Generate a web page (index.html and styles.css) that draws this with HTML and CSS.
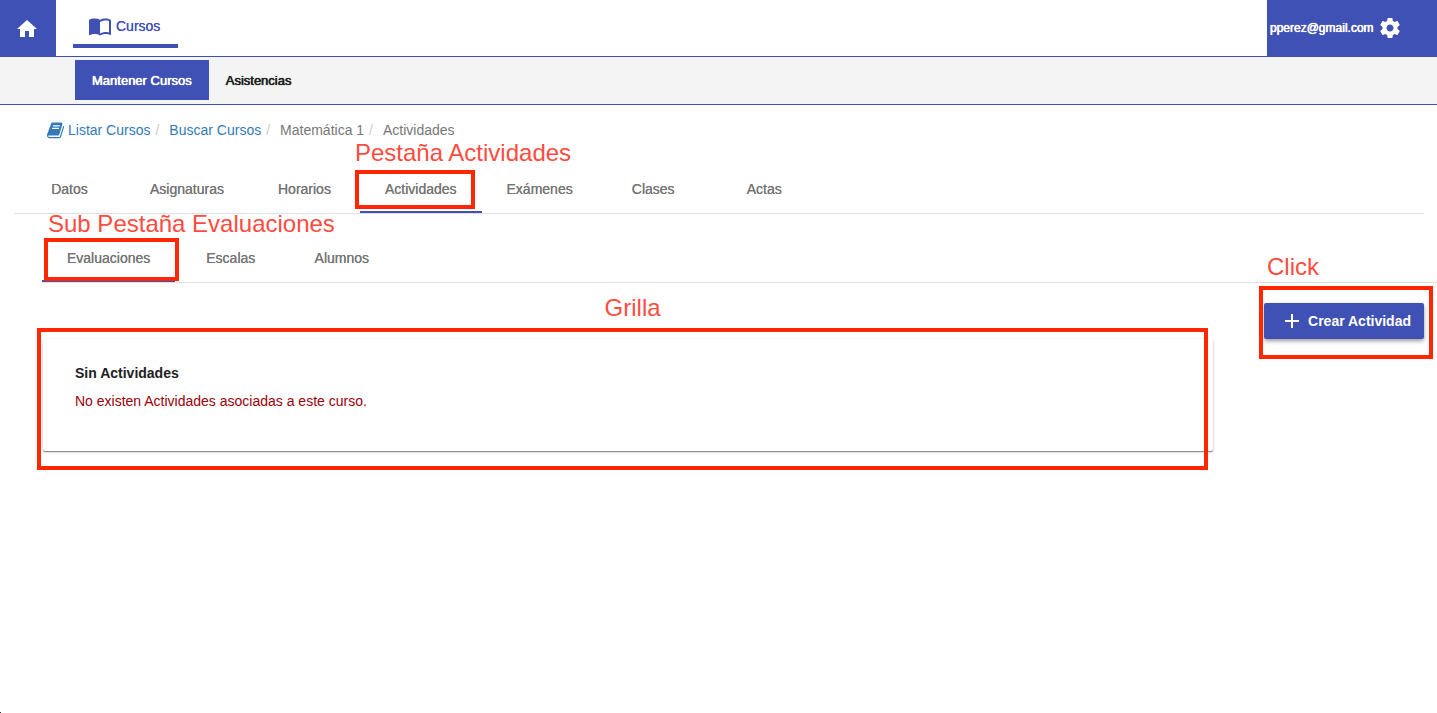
FILE: index.html
```html
<!DOCTYPE html>
<html lang="es">
<head>
<meta charset="utf-8">
<meta name="viewport" content="width=device-width, initial-scale=1">
<title>Mantener Cursos</title>
<link rel="stylesheet" href="styles.css">
</head>
<body>
<header class="topbar">
  <a class="home" href="#" aria-label="Inicio">
    <svg width="24" height="24" viewBox="0 0 24 24" fill="currentColor"><path d="M10 20v-6h4v6h5v-8h3L12 3 2 12h3v8z"/></svg>
  </a>
  <nav class="modules">
    <a class="module" href="#">
      <svg width="24" height="24" viewBox="0 0 24 24" fill="currentColor"><path d="M21 5c-1.11-.35-2.33-.5-3.5-.5-1.95 0-4.05.4-5.5 1.5-1.45-1.1-3.55-1.5-5.5-1.5S2.45 4.900 1 6v14.650c0 .25.25.5.5.5.1 0 .15-.05.25-.05C3.100 20.450 5.050 20 6.500 20c1.950 0 4.050.4 5.500 1.500 1.350-.85 3.800-1.500 5.500-1.500 1.650 0 3.350.3 4.750 1.050.1.05.15.05.25.05.25 0 .5-.25.5-.5V6c-.6-.45-1.250-.75-2-1zm0 13.500c-1.100-.35-2.300-.5-3.500-.5-1.700 0-4.150.65-5.500 1.500V8c1.350-.85 3.800-1.500 5.500-1.500 1.200 0 2.400.15 3.500.5v11.500z"/></svg>
      <span>Cursos</span>
    </a>
  </nav>
  <button class="account" type="button">
    <span>pperez@gmail.com</span>
    <svg width="24" height="24" viewBox="0 0 24 24" fill="currentColor"><path d="M19.430 12.980c.04-.32.07-.64.07-.98s-.03-.66-.07-.98l2.110-1.650c.19-.15.24-.42.12-.64l-2-3.460c-.12-.22-.39-.3-.61-.22l-2.490 1c-.52-.4-1.080-.73-1.690-.98l-.38-2.650C14.460 2.180 14.250 2 14 2h-4c-.25 0-.46.18-.49.42l-.38 2.650c-.61.25-1.170.59-1.690.98l-2.490-1c-.23-.09-.49 0-.61.22l-2 3.460c-.13.22-.07.49.12.64l2.110 1.650c-.04.32-.07.65-.07.98s.03.66.07.98l-2.110 1.650c-.19.15-.24.42-.12.64l2 3.460c.12.22.39.3.61.22l2.490-1c.52.4 1.080.73 1.690.98l.38 2.650c.03.24.24.42.49.42h4c.25 0 .46-.18.49-.42l.38-2.650c.61-.25 1.170-.59 1.690-.98l2.490 1c.23.09.49 0 .61-.22l2-3.460c.12-.22.07-.49-.12-.64l-2.110-1.650zM12 15.500c-1.930 0-3.500-1.570-3.500-3.500s1.570-3.500 3.500-3.500 3.500 1.570 3.500 3.500-1.570 3.500-3.500 3.500z"/></svg>
  </button>
</header>
<nav class="subnav">
  <a class="subnav-item current" href="#">Mantener Cursos</a>
  <a class="subnav-item" href="#">Asistencias</a>
</nav>
<main>
  <nav class="crumbs" aria-label="Ruta">
    <svg width="17" height="17" viewBox="0 -60 1664 1600" fill="currentColor"><path d="M1639 308q40 57 18 129l-275 906q-19 64-76.500 107.500T1183 1494H260q-77 0-148.500-53.500T12 1309q-24-67-2-127 0-4 3-27t4-37q1-8-3-21.500t-3-19.500q2-11 8-21t16.500-23.500T52 1009q23-38 45-91.500t30-91.500q3-10 .5-30t-.5-28q3-11 17-28t17-23q21-36 42-92t25-90q1-9-2.500-32t.5-28q4-13 22-30.500t22-22.500q19-26 42.500-84.500T340 240q1-8-3-25.500t-2-26.500q2-8 9-18t18-23 17-21q8-12 16.500-30.500t15-35 16-36 19.500-32T472.500-31t36-11.500T556-37l-1 3q38-9 51-9h761q74 0 114 56t18 130l-274 906q-36 119-71.500 153.500T1025 1237H156q-27 0-38 15-11 16-1 43 24 70 144 70h923q29 0 56-15.500t35-41.500l300-987q7-22 5-57 38 15 59 43zm-1064 2q-4 13 2 22.500t20 9.500h608q13 0 25.500-9.500T1247 310l21-64q4-13-2-22.500t-20-9.500H638q-13 0-25.500 9.500T596 246zm-83 256q-4 13 2 22.500t20 9.500h608q13 0 25.500-9.500T1164 566l21-64q4-13-2-22.500t-20-9.500H555q-13 0-25.500 9.500T513 502z"/></svg>
    <ol>
      <li><a href="#">Listar Cursos</a></li>
      <li><a href="#">Buscar Cursos</a></li>
      <li>Matemática 1</li>
      <li>Actividades</li>
    </ol>
  </nav>
  <div class="tabs" role="tablist" aria-label="Curso">
    <button class="tab" role="tab" type="button">Datos</button>
    <button class="tab" role="tab" type="button">Asignaturas</button>
    <button class="tab" role="tab" type="button">Horarios</button>
    <div class="marked">
      <button class="tab active" role="tab" type="button" aria-selected="true">Actividades</button>
      <span class="note note-tab">Pestaña Actividades</span>
      <span class="frame frame-tab"></span>
    </div>
    <button class="tab" role="tab" type="button">Exámenes</button>
    <button class="tab" role="tab" type="button">Clases</button>
    <button class="tab" role="tab" type="button">Actas</button>
  </div>
  <div class="tabs subtabs" role="tablist" aria-label="Actividades">
    <div class="marked">
      <button class="tab active" role="tab" type="button" aria-selected="true">Evaluaciones</button>
      <span class="note note-subtab">Sub Pestaña Evaluaciones</span>
      <span class="frame frame-subtab"></span>
    </div>
    <button class="tab" role="tab" type="button">Escalas</button>
    <button class="tab" role="tab" type="button">Alumnos</button>
  </div>
  <div class="content">
    <section class="card marked">
      <h2>Sin Actividades</h2>
      <p>No existen Actividades asociadas a este curso.</p>
      <span class="note note-grid">Grilla</span>
      <span class="frame frame-grid"></span>
    </section>
    <div class="marked">
      <button class="create" type="button">
        <svg width="24" height="24" viewBox="0 0 24 24" fill="currentColor"><path d="M19 13h-6v6h-2v-6H5v-2h6V5h2v6h6z"/></svg>
        <span>Crear Actividad</span>
      </button>
      <span class="note note-create">Click</span>
      <span class="frame frame-create"></span>
    </div>
  </div>
</main>
</body>
</html>
```
FILE: styles.css
```css
:root {
  --primary: #3f51b5;
  --mark: #ff2600;
}
* { box-sizing: border-box; }
body {
  min-height: 100vh;
  margin: 0;
  background: #fff;
  color: #212121;
  font: 14px/20px "Liberation Sans", Arial, sans-serif;
}
body::after {
  content: "";
  position: fixed;
  bottom: 0;
  left: 0;
  width: 1px;
  height: 1px;
  background: #333;
}
a { color: inherit; text-decoration: none; }
button { border: 0; background: none; color: inherit; font: inherit; cursor: pointer; }
svg { display: block; flex: none; }

.topbar {
  display: flex;
  height: 57px;
  border-bottom: 1px solid var(--primary);
}
.home {
  display: flex;
  align-items: center;
  width: 56px;
  padding: 2px 15px 0;
  background: var(--primary);
  color: #fff;
}
.modules { flex: 1; padding-left: 17px; }
.module {
  display: inline-flex;
  align-items: center;
  gap: 4px;
  height: 48px;
  padding: 8px 18px 0 15px;
  border-bottom: 4px solid var(--primary);
  color: var(--primary);
  text-shadow: 0 0 0 currentColor;
}
.account {
  display: flex;
  align-items: center;
  gap: 4px;
  width: 170px;
  padding: 0 0 0 3px;
  background: var(--primary);
  color: #fff;
  font-size: 12px;
  text-shadow: 0 0 0 currentColor, 0 0 1px currentColor;
}

.subnav {
  display: flex;
  height: 48px;
  padding: 3px 75px 4px;
  border-bottom: 1px solid var(--primary);
  background: #f4f4f4;
}
.subnav-item {
  display: flex;
  align-items: center;
  padding: 2px 17px 0;
  font-size: 13px;
  text-shadow: 0 0 0 currentColor, 0 0 1px currentColor;
}
.subnav-item.current { background: var(--primary); color: #fff; }

.crumbs {
  display: flex;
  align-items: center;
  gap: 4px;
  padding: 15px 47px;
  color: #337ab7;
}
.crumbs ol { display: flex; margin: 0; padding: 0; list-style: none; }
.crumbs li { color: #777; }
.crumbs a { color: #337ab7; }
.crumbs li + li::before { content: "/"; padding: 0 10px 0 5px; color: #ccc; }

.tabs {
  display: flex;
  height: 49px;
  margin: 10px 13px 0 14px;
  border-bottom: 1px solid #e0e0e0;
}
.subtabs { margin: 20px 0 0 42px; }
.tab {
  min-width: 111px;
  height: 48px;
  padding: 0 25px;
  color: #757575;
  text-shadow: 0 0 0 currentColor;
}
.tab.active { box-shadow: inset 0 -2px var(--primary); }

.content {
  display: flex;
  align-items: flex-start;
  gap: 51px;
  padding: 20px 13px 20px 43px;
}
.card {
  flex: 1;
  margin-top: 36px;
  padding: 24px 32px 40px;
  border-radius: 2px;
  box-shadow: 0 1px 1px rgba(0, 0, 0, .4), 0 1px 3px rgba(0, 0, 0, .2);
}
.card h2 { margin: 0 0 8px; font-size: 14px; line-height: 20px; }
.card p { margin: 0; color: #990009; }
.create {
  display: flex;
  align-items: center;
  gap: 4px;
  height: 36px;
  padding: 0 13px 0 16px;
  border-radius: 2px;
  background: var(--primary);
  box-shadow: 0 2px 4px rgba(0, 0, 0, .4);
  color: #fff;
  font-weight: bold;
}

/* Guide annotations laid over the interface */
.marked { position: relative; }
.note {
  position: absolute;
  color: #ff4b40;
  font-size: 24px;
  line-height: 28px;
  white-space: nowrap;
  pointer-events: none;
}
.frame {
  position: absolute;
  border: 4px solid var(--mark);
  pointer-events: none;
}
.note-tab { top: -26px; left: -5px; }
.frame-tab { inset: 5px 7px 4px -5px; }
.note-subtab { top: -24px; left: 6px; }
.frame-subtab { inset: 4px -4px 1px 2px; }
.note-grid { top: -45px; left: 48%; }
.frame-grid { inset: -11px 5px -19px -6px; }
.note-create { top: -50px; left: 3px; }
.frame-create { inset: -17px -9px -20px -5px; }
```
